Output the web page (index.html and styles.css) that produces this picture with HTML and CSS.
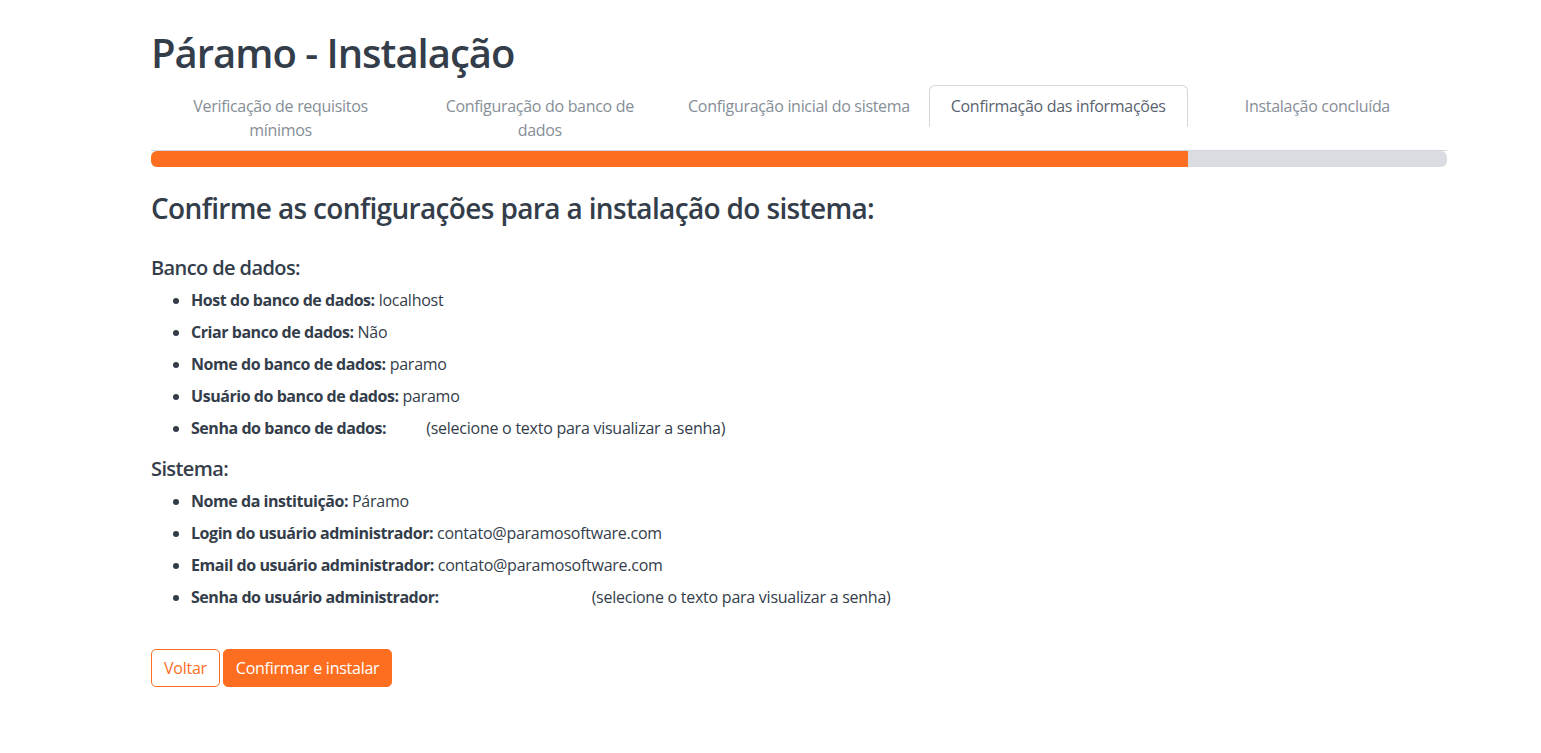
FILE: index.html
```html
<!DOCTYPE html>
<html lang="pt-BR">
<head>
<meta charset="utf-8">
<title>Páramo - Instalação</title>
<link rel="stylesheet" href="styles.css">
</head>
<body>
<div class="container">
  <h1 class="title">Páramo - Instalação</h1>
  <ul class="tabs">
    <li class="tab"><span class="tab-link">Verificação de requisitos mínimos</span></li>
    <li class="tab"><span class="tab-link">Configuração do banco de dados</span></li>
    <li class="tab"><span class="tab-link">Configuração inicial do sistema</span></li>
    <li class="tab"><span class="tab-link active">Confirmação das informações</span></li>
    <li class="tab"><span class="tab-link">Instalação concluída</span></li>
  </ul>
  <div class="progress"><div class="progress-bar" style="width: 80%"></div></div>

  <h3 class="section-title">Confirme as configurações para a instalação do sistema:</h3>

  <h5 class="group-title">Banco de dados:</h5>
  <ul class="info-list">
    <li><b>Host do banco de dados:</b> localhost</li>
    <li><b>Criar banco de dados:</b> Não</li>
    <li><b>Nome do banco de dados:</b> paramo</li>
    <li><b>Usuário do banco de dados:</b> paramo</li>
    <li><b>Senha do banco de dados:</b> <span class="secret secret-short">senh</span> (selecione o texto para visualizar a senha)</li>
  </ul>

  <h5 class="group-title">Sistema:</h5>
  <ul class="info-list">
    <li><b>Nome da instituição:</b> Páramo</li>
    <li><b>Login do usuário administrador:</b> contato@paramosoftware.com</li>
    <li><b>Email do usuário administrador:</b> contato@paramosoftware.com</li>
    <li><b>Senha do usuário administrador:</b> <span class="secret secret-long">SenhaAdministrador</span> (selecione o texto para visualizar a senha)</li>
  </ul>

  <div class="actions">
    <button class="btn btn-outline">Voltar</button>
    <button class="btn btn-primary">Confirmar e instalar</button>
  </div>
</div>
</body>
</html>
```

FILE: styles.css
```css
html, body {
  margin: 0;
  padding: 0;
  background: #ffffff;
}

body {
  font-family: "Open Sans", "Noto Sans", sans-serif;
  font-size: 16px;
  line-height: 24px;
  letter-spacing: -0.25px;
  color: #343d4a;
}

.container {
  width: 1296px;
  margin-left: 151px;
  padding-top: 29px;
}

.title {
  margin: 0 0 8px 0;
  font-size: 40px;
  line-height: 48px;
  font-weight: 600;
  letter-spacing: -1px;
  color: #343d4a;
}

.tabs {
  display: flex;
  align-items: flex-start;
  list-style: none;
  margin: 0;
  padding: 0;
  border-bottom: 1px solid #d3d7dc;
}

.tab {
  flex: 1 1 0;
  margin-bottom: -1px;
  text-align: center;
}

.tab-link {
  display: block;
  padding: 8px 14px;
  border: 1px solid transparent;
  border-top-left-radius: 6px;
  border-top-right-radius: 6px;
  color: #868e97;
  letter-spacing: -0.3px;
}

.tab-link.active {
  color: #5a6370;
  background: #ffffff;
  border-color: #d3d7dc #d3d7dc #ffffff;
}

.progress {
  height: 16px;
  background: #d9dce1;
  border-radius: 6px;
  overflow: hidden;
  display: flex;
}

.progress-bar {
  background: #fe6e21;
  height: 100%;
}

.section-title {
  margin: 24px 0 0 0;
  font-size: 28px;
  line-height: 34px;
  font-weight: 600;
  letter-spacing: -0.65px;
}

.group-title {
  margin: 31px 0 8px 0;
  font-size: 20px;
  line-height: 24px;
  font-weight: 600;
  letter-spacing: -0.6px;
}

.info-list + .group-title {
  margin-top: 17px;
}

.info-list {
  margin: 0;
  padding-left: 40px;
}

.info-list li {
  margin-bottom: 8px;
}

.info-list b {
  font-weight: 700;
  letter-spacing: -0.45px;
}

.secret {
  color: #ffffff;
}

.secret-short {
  letter-spacing: -1px;
}

.secret-long {
  letter-spacing: -0.47px;
}

.actions {
  display: flex;
  gap: 3px;
  margin-top: 40px;
}

.btn {
  font-family: inherit;
  font-size: 16px;
  line-height: 24px;
  letter-spacing: -0.25px;
  padding: 6px 12px;
  border: 1px solid #fe6e21;
  border-radius: 5px;
  cursor: pointer;
}

.btn-outline {
  background: #ffffff;
  color: #fe6e21;
}

.btn-primary {
  background: #fe6e21;
  color: #ffffff;
}
```
